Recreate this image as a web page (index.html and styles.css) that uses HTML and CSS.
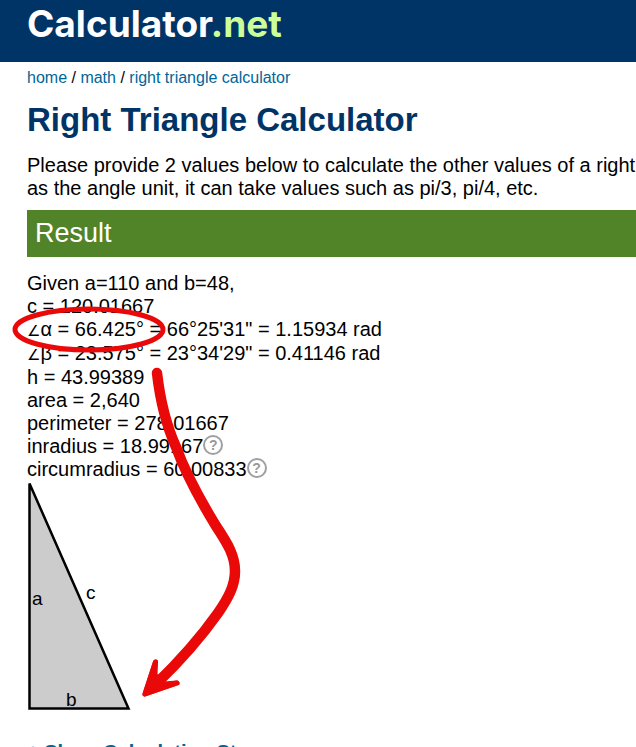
FILE: index.html
```html
<!DOCTYPE html>
<html lang="en">
<head>
    <meta charset="UTF-8">
    <meta name="viewport" content="width=device-width, initial-scale=1.0">
    <title>Right Triangle Calculator</title>
    <link rel="stylesheet" href="styles.css">
</head>
<body>
    <header class="header">
        <a href="#" class="logo">Calculator<span class="logo-net">.net</span></a>
    </header>
    <main class="content">
        <nav class="breadcrumbs">
            <a href="#">home</a> / <a href="#">math</a> / <a href="#">right triangle calculator</a>
        </nav>
        <h1>Right Triangle Calculator</h1>
        <p class="intro">Please provide 2 values below to calculate the other values of a right as the angle unit, it can take values such as pi/3, pi/4, etc.</p>
        <h2 class="result-title">Result</h2>
        <section class="result">
            <div>Given a=110 and b=48,</div>
            <div>c = 120.01667</div>
            <div class="angle-row"><span class="angle">∠</span>α = 66.425° = 66°25'31" = 1.15934 rad</div>
            <div class="angle-row"><span class="angle">∠</span>β = 23.575° = 23°34'29" = 0.41146 rad</div>
            <div>h = 43.99389</div>
            <div>area = 2,640</div>
            <div>perimeter = 278.01667</div>
            <div class="help-row">inradius = 18.99167<button class="help" aria-label="About inradius">?</button></div>
            <div class="help-row">circumradius = 60.00833<button class="help" aria-label="About circumradius">?</button></div>
            <svg class="triangle" width="104" height="232" viewBox="0 0 104 232">
                <path d="M2.5 2.5V227.5H101.5Z" fill="#ccc" stroke="#000" stroke-width="2.5"/>
                <text x="5" y="124">a</text>
                <text x="59" y="118">c</text>
                <text x="39" y="225">b</text>
            </svg>
            <!-- marks angle alpha and points to its corner -->
            <svg class="marker" width="260" height="440" viewBox="0 270 260 440" fill="none" stroke="#ea0909" stroke-linecap="round" stroke-linejoin="round">
                <ellipse cx="89" cy="329.5" rx="74" ry="20.5" stroke-width="5"/>
                <path d="M157 373C160 399 167 427 176 447C188 480 205 508 216 526C228 544 235 556 235 571C235 585 229 597 218 613C201 637 181 660 156 684" stroke-width="10.5"/>
                <path d="M155.5 662L145 694L177 683L158 686L152 682Z" fill="#ea0909" stroke-width="5"/>
                <path d="M155.5 662L145 694L177 683L164 684L155 675Z" fill="#ea0909" stroke-width="5"/>
            </svg>
        </section>
        <a href="#" class="steps">+ Show Calculation Steps</a>
    </main>
</body>
</html>
```

FILE: styles.css
```css
html {
    overflow: hidden;
}
body {
    margin: 0;
    background: #fff;
    color: #000;
    font-family: Arial, "Liberation Sans", sans-serif;
    font-size: 20px;
    line-height: 23px;
}
a {
    color: #006699;
    text-decoration: none;
}
.header {
    height: 62px;
    padding-left: 27px;
    background: #003366;
}
.logo {
    color: #fff;
    font-family: Inter, sans-serif;
    font-size: 37px;
    font-weight: 700;
    line-height: 48px;
}
.logo-net {
    color: #ccff99;
}
.content {
    padding-left: 27px;
}
.breadcrumbs {
    padding-top: 6px;
    font-size: 16px;
    line-height: 20px;
}
h1 {
    margin: 12px 0 14px;
    color: #003366;
    font-size: 33px;
    line-height: 40px;
}
.intro {
    margin: 0 0 10px;
}
.result-title {
    margin: 0 0 15px;
    padding: 0 8px;
    background: #518428;
    color: #fff;
    font-size: 27px;
    font-weight: 400;
    line-height: 47px;
}
.result {
    position: relative;
}
.angle-row {
    line-height: 23px;
}
.angle-row + .angle-row {
    line-height: 25px;
}
.angle {
    font-family: "DejaVu Sans", sans-serif;
    font-size: 15px;
    line-height: 20px;
}
.help-row {
    display: flex;
    align-items: center;
}
.help {
    box-sizing: border-box;
    width: 20px;
    height: 20px;
    margin-bottom: 3px;
    padding: 0;
    border: 2px solid #a0a0a0;
    border-radius: 50%;
    background: #fff;
    color: #999;
    font-family: Arial, "Liberation Sans", sans-serif;
    font-size: 14px;
    font-weight: 700;
    line-height: 16px;
}
.triangle {
    display: block;
    font-size: 19px;
}
.marker {
    position: absolute;
    top: -2px;
    left: -27px;
    pointer-events: none;
}
.steps {
    display: block;
    margin-top: 28px;
    font-weight: 700;
}
```
